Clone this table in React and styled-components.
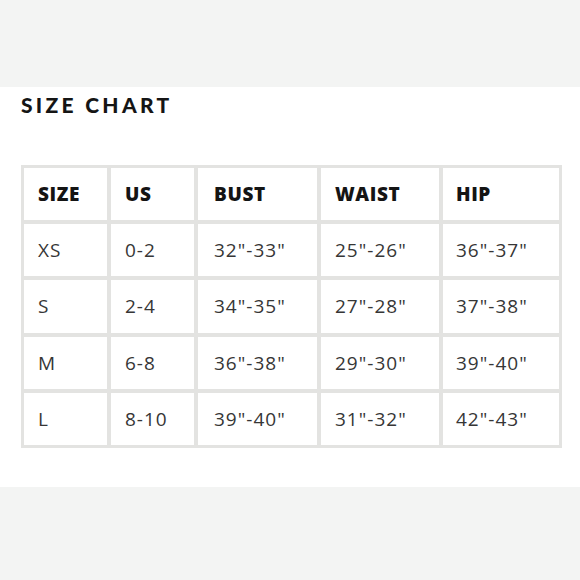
import React from "react";
import styled, { createGlobalStyle } from "styled-components";

const Global = createGlobalStyle`
  html, body { margin: 0; padding: 0; background: #f3f4f3; }
  body { font-family: "Open Sans", "Liberation Sans", sans-serif; }
`;

const Page = styled.div`
  width: 580px;
  height: 580px;
  background: #f3f4f3;
  padding-top: 87px;
  box-sizing: border-box;
`;

const Sheet = styled.section`
  background: #ffffff;
  height: 400px;
  padding: 6px 18px 0 21px;
  box-sizing: border-box;
`;

const Title = styled.h1`
  margin: 0 0 48px;
  font-family: "Lato", "Liberation Sans", sans-serif;
  font-weight: 900;
  font-size: 21px;
  line-height: 24px;
  letter-spacing: 3.3px;
  color: #151515;
`;

const Table = styled.div`
  display: grid;
  grid-template-columns: 83px 83px 119px 118px 116px;
  grid-auto-rows: 52.2px;
  gap: 4px;
  padding: 3px;
  width: 541px;
  box-sizing: border-box;
  background: #e3e3e1;
`;

const Cell = styled.div`
  background: #ffffff;
  display: flex;
  align-items: center;
  padding-left: ${(p) => p.$pad || 14}px;
  font-size: 19px;
  font-weight: ${(p) => (p.$head ? 800 : 400)};
  letter-spacing: ${(p) => (p.$head ? "0.6px" : "1px")};
  color: ${(p) => (p.$head ? "#141414" : "#363636")};
`;

const pads = [14, 14, 16, 14, 13];
const head = ["SIZE", "US", "BUST", "WAIST", "HIP"];
const rows = [
  ["XS", "0-2", '32"-33"', '25"-26"', '36"-37"'],
  ["S", "2-4", '34"-35"', '27"-28"', '37"-38"'],
  ["M", "6-8", '36"-38"', '29"-30"', '39"-40"'],
  ["L", "8-10", '39"-40"', '31"-32"', '42"-43"'],
];

export default function App() {
  return (
    <Page>
      <Global />
      <Sheet>
        <Title>SIZE CHART</Title>
        <Table>
          {head.map((h, i) => (
            <Cell key={h} $head $pad={pads[i]}>{h}</Cell>
          ))}
          {rows.map((r) =>
            r.map((v, i) => (
              <Cell key={r[0] + i} $pad={pads[i]}>{v}</Cell>
            ))
          )}
        </Table>
      </Sheet>
    </Page>
  );
}
